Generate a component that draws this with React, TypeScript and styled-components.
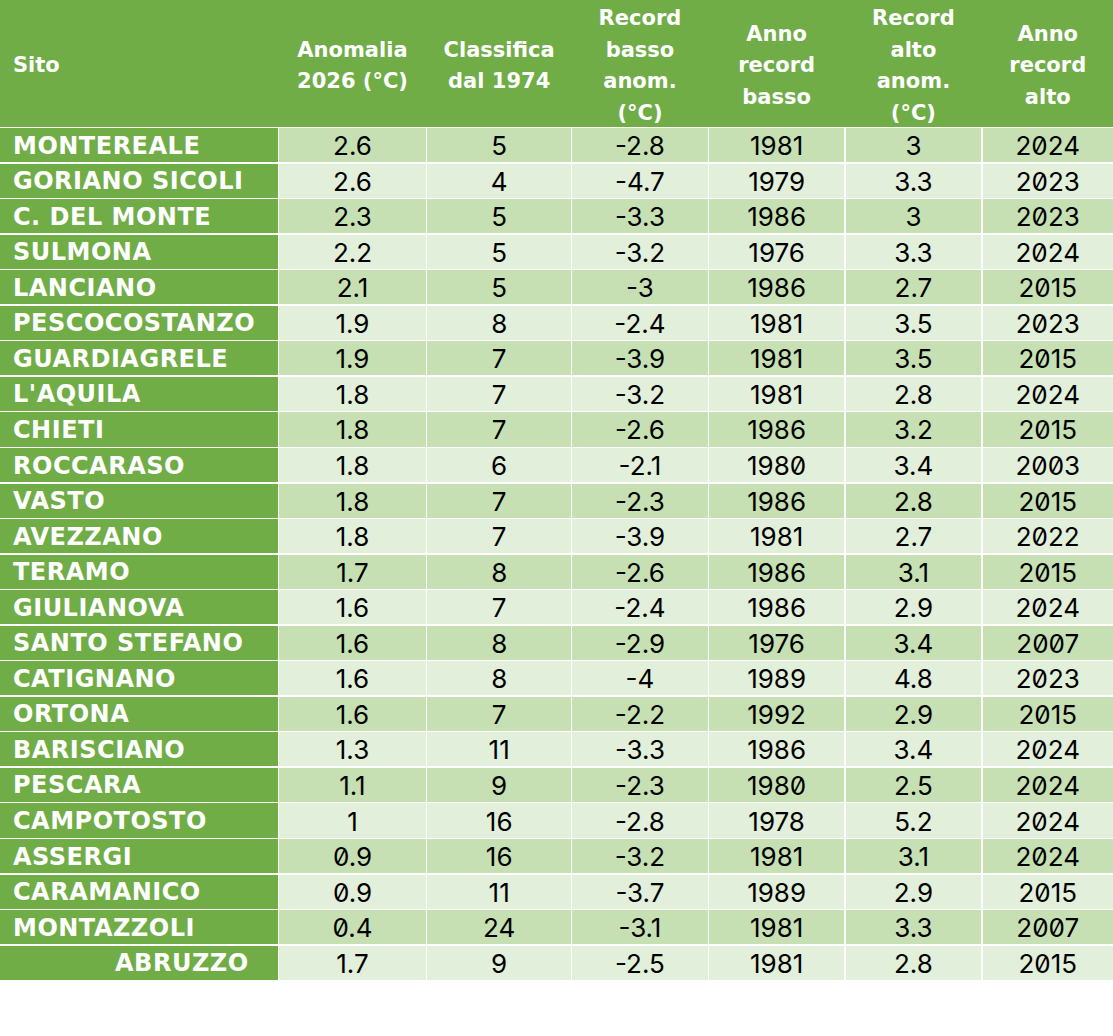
import React from 'react';
import styled, { createGlobalStyle } from 'styled-components';

const GlobalStyle = createGlobalStyle`
  html, body {
    margin: 0;
    padding: 0;
    background: #ffffff;
  }
`;

const COLUMNS = '277.6px 147px 143.6px 135.2px 135.4px 135.4px 1fr';

type Row = [string, string, string, string, string, string, string];

const rows: Row[] = [
  ['MONTEREALE', '2.6', '5', '-2.8', '1981', '3', '2024'],
  ['GORIANO SICOLI', '2.6', '4', '-4.7', '1979', '3.3', '2023'],
  ['C. DEL MONTE', '2.3', '5', '-3.3', '1986', '3', '2023'],
  ['SULMONA', '2.2', '5', '-3.2', '1976', '3.3', '2024'],
  ['LANCIANO', '2.1', '5', '-3', '1986', '2.7', '2015'],
  ['PESCOCOSTANZO', '1.9', '8', '-2.4', '1981', '3.5', '2023'],
  ['GUARDIAGRELE', '1.9', '7', '-3.9', '1981', '3.5', '2015'],
  ["L'AQUILA", '1.8', '7', '-3.2', '1981', '2.8', '2024'],
  ['CHIETI', '1.8', '7', '-2.6', '1986', '3.2', '2015'],
  ['ROCCARASO', '1.8', '6', '-2.1', '1980', '3.4', '2003'],
  ['VASTO', '1.8', '7', '-2.3', '1986', '2.8', '2015'],
  ['AVEZZANO', '1.8', '7', '-3.9', '1981', '2.7', '2022'],
  ['TERAMO', '1.7', '8', '-2.6', '1986', '3.1', '2015'],
  ['GIULIANOVA', '1.6', '7', '-2.4', '1986', '2.9', '2024'],
  ['SANTO STEFANO', '1.6', '8', '-2.9', '1976', '3.4', '2007'],
  ['CATIGNANO', '1.6', '8', '-4', '1989', '4.8', '2023'],
  ['ORTONA', '1.6', '7', '-2.2', '1992', '2.9', '2015'],
  ['BARISCIANO', '1.3', '11', '-3.3', '1986', '3.4', '2024'],
  ['PESCARA', '1.1', '9', '-2.3', '1980', '2.5', '2024'],
  ['CAMPOTOSTO', '1', '16', '-2.8', '1978', '5.2', '2024'],
  ['ASSERGI', '0.9', '16', '-3.2', '1981', '3.1', '2024'],
  ['CARAMANICO', '0.9', '11', '-3.7', '1989', '2.9', '2015'],
  ['MONTAZZOLI', '0.4', '24', '-3.1', '1981', '3.3', '2007'],
];

const total: Row = ['ABRUZZO', '1.7', '9', '-2.5', '1981', '2.8', '2015'];

const headers = [
  ['Anomalia', '2026 (°C)'],
  ['Classifica', 'dal 1974'],
  ['Record', 'basso', 'anom.', '(°C)'],
  ['Anno', 'record', 'basso'],
  ['Record', 'alto', 'anom.', '(°C)'],
  ['Anno', 'record', 'alto'],
];

const Table = styled.div`
  width: 1113px;
  display: flex;
  flex-direction: column;
  gap: 1.5px;
  background: #ffffff;
`;

const HeaderRow = styled.div`
  display: grid;
  grid-template-columns: ${COLUMNS};
  column-gap: 1.4px;
  height: 126.6px;
  padding-top: 3px;
  box-sizing: border-box;
  background: #70ad47;
  color: #ffffff;
  font-family: 'DejaVu Sans', Verdana, sans-serif;
  font-weight: 700;
  font-size: 21px;
  line-height: 31.5px;
`;

const HeaderCell = styled.div<{ $left?: boolean }>`
  display: flex;
  flex-direction: column;
  justify-content: center;
  align-items: ${(p) => (p.$left ? 'flex-start' : 'center')};
  padding-left: ${(p) => (p.$left ? '13px' : '0')};
  text-align: center;
  white-space: nowrap;
`;

const BodyRow = styled.div`
  display: grid;
  grid-template-columns: ${COLUMNS};
  column-gap: 1.4px;
  height: 34.05px;
`;

const SiteCell = styled.div<{ $right?: boolean }>`
  display: flex;
  align-items: center;
  justify-content: ${(p) => (p.$right ? 'flex-end' : 'flex-start')};
  padding: ${(p) => (p.$right ? '1px 29px 0 0' : '1px 0 0 13px')};
  background: #70ad47;
  color: #ffffff;
  font-family: 'DejaVu Sans', Verdana, sans-serif;
  font-weight: 700;
  font-size: 24px;
  letter-spacing: 0.5px;
  white-space: nowrap;
`;

const ValueCell = styled.div<{ $shade: boolean }>`
  display: flex;
  align-items: center;
  justify-content: center;
  padding-top: 1px;
  background: ${(p) => (p.$shade ? '#c6e0b4' : '#e2efda')};
  color: #000000;
  font-family: Inter, 'Liberation Sans', sans-serif;
  font-feature-settings: 'zero' 1;
  font-size: 26px;
`;

function DataRow({ row, shade, isTotal }: { row: Row; shade: boolean; isTotal?: boolean }) {
  const [site, ...values] = row;
  return (
    <BodyRow>
      <SiteCell $right={isTotal}>{site}</SiteCell>
      {values.map((v, i) => (
        <ValueCell key={i} $shade={shade}>
          {v}
        </ValueCell>
      ))}
    </BodyRow>
  );
}

export default function App() {
  return (
    <>
      <GlobalStyle />
      <Table>
        <HeaderRow>
          <HeaderCell $left>Sito</HeaderCell>
          {headers.map((lines, i) => (
            <HeaderCell key={i}>
              {lines.map((l) => (
                <span key={l}>{l}</span>
              ))}
            </HeaderCell>
          ))}
        </HeaderRow>
        {rows.map((r, i) => (
          <DataRow key={r[0]} row={r} shade={i % 2 === 0} />
        ))}
        <DataRow row={total} shade={false} isTotal />
      </Table>
    </>
  );
}
